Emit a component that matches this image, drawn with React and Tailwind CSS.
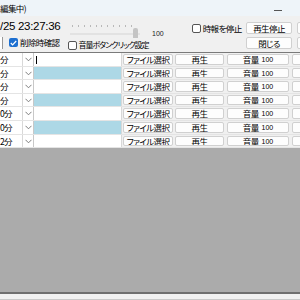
import React from "react";

const F = { fontFamily: '"Noto Sans CJK JP", "Noto Sans", sans-serif' };
const JP = "whitespace-nowrap text-[8.5px] leading-none tracking-[-0.6px] text-black [font-feature-settings:'palt']";
const LS = { fontFamily: '"Liberation Sans", Arial, sans-serif' };

function Chevron() {
  return (
    <svg width="7" height="5" viewBox="0 0 7 5" className="block">
      <path d="M0.5 0.8 L3.5 3.8 L6.5 0.8" fill="none" stroke="#707070" strokeWidth="0.9" />
    </svg>
  );
}

function Btn({ children, className = "" }) {
  return (
    <div
      className={
        "shrink-0 whitespace-nowrap overflow-hidden flex items-center justify-center bg-[#fdfdfd] border border-[#d0d0d0] rounded-[2px] " +
        className
      }
    >
      {children}
    </div>
  );
}

function Row({ label, blue, h, first }) {
  return (
    <div className={"flex items-stretch border-b border-[#e4e4e4] bg-[#f0f0f0] " + h}>
      <div className={"shrink-0 w-[23px] bg-white flex items-center border-r border-[#d8d8d8] " + JP}>
        {label}
      </div>
      <div className="shrink-0 w-[11px] bg-white flex items-center justify-center border-r border-[#c8c8c8]">
        <Chevron />
      </div>
      <div className={"shrink-0 w-[88px] flex items-center border-r border-[#d8d8d8] " + (blue ? "bg-[#add8e6]" : "bg-white")}>
        {first ? <div className="ml-[2px] w-px h-[8px] bg-black" /> : null}
      </div>
      <div className="shrink-0 w-[1px]" />
      <Btn className="w-[50px] my-[1px]">
        <span className={JP}>ファイル選択</span>
      </Btn>
      <div className="shrink-0 w-[2px]" />
      <Btn className="w-[49px] my-[1px]">
        <span className={JP}>再生</span>
      </Btn>
      <div className="shrink-0 w-[3px]" />
      <Btn className="w-[62px] my-[1px]">
        <span className={JP}>音量</span>
        <span className="ml-[3px] text-[7px] leading-none text-black" style={LS}>100</span>
      </Btn>
      <div className="shrink-0 w-[3px]" />
      <Btn className="w-[20px] my-[1px]"> </Btn>
    </div>
  );
}

export default function App() {
  const rows = [
    { label: "分", blue: false, h: "h-[14px]", first: true },
    { label: "分", blue: true, h: "h-[13px]" },
    { label: "分", blue: false, h: "h-[14px]" },
    { label: "分", blue: true, h: "h-[13px]" },
    { label: "0分", blue: false, h: "h-[14px]" },
    { label: "0分", blue: true, h: "h-[14px]" },
    { label: "2分", blue: false, h: "h-[13px]" },
  ];
  return (
    <div className="w-[300px] h-[300px] overflow-hidden bg-[#f0f0f0] flex flex-col" style={F}>
      {/* title bar */}
      <div className="h-[16px] bg-[#eef4f9] flex items-center justify-between shrink-0">
        <span className={JP + " mt-[1px]"}>編集中)</span>
        <div className="w-[8px] h-px bg-[#555] mr-[18px] mt-[4px]" />
      </div>
      {/* top controls */}
      <div className="h-[36px] flex shrink-0">
        <div className="w-[246px] shrink-0 flex flex-col">
          <div className="h-[20px] flex items-start whitespace-nowrap">
            <span className="shrink-0 w-[62px] mt-[5px] text-[11.5px] leading-none tracking-[-0.3px] text-black" style={LS}>/25 23:27:36</span>
            <div className="shrink-0 ml-[8px] w-[70px] h-[20px] relative">
              <div className="absolute left-[2px] right-[8px] top-[9px] flex justify-between">
                {Array.from({ length: 11 }).map((_, i) => (
                  <div key={i} className="w-px h-[2px] bg-[#b8b8b8]" />
                ))}
              </div>
              <div className="absolute left-0 right-0 top-[17px] h-[2px] bg-[#e2e2e2]" />
              <div className="absolute left-[63px] top-[12px] w-[5px] h-[10px] bg-[#c4c4c4] rounded-t-[2px]" />
            </div>
            <span className="shrink-0 ml-[12px] mt-[14px] text-[7px] leading-none text-[#222]" style={LS}>100</span>
            <div className="shrink-0 ml-[28px] mt-[8px] w-[9px] h-[9px] border border-[#555] rounded-[2px] bg-white" />
            <span className={"shrink-0 ml-[2px] mt-[8px] " + JP}>時報を停止</span>
          </div>
          <div className="h-[16px] flex items-start whitespace-nowrap">
            <div className="shrink-0 mt-[1px] w-[3px] h-[12px] bg-white border-r border-[#999]" />
            <div className="shrink-0 ml-[6px] mt-[2px] w-[9px] h-[9px] rounded-[2px] bg-[#1d6fd0] flex items-center justify-center">
              <svg width="7" height="6" viewBox="0 0 7 6">
                <path d="M0.8 3 L2.6 4.8 L6.2 1" fill="none" stroke="#fff" strokeWidth="1.2" />
              </svg>
            </div>
            <span className={"shrink-0 ml-[2px] mt-[2px] " + JP}>削除時確認</span>
            <div className="shrink-0 ml-[8px] mt-[5px] w-[9px] h-[9px] border border-[#555] rounded-[2px] bg-white" />
            <span className="shrink-0 ml-[2px] mt-[5px] whitespace-nowrap text-[8px] leading-none tracking-[-1px] text-black [font-feature-settings:'palt']">音量ボタンクリック設定</span>
          </div>
        </div>
        <div className="flex flex-col pt-[6px] gap-[3px]">
          <div className="flex gap-[5px]">
            <Btn className="w-[46px] h-[12px]">
              <span className={JP}>再生停止</span>
            </Btn>
            <Btn className="w-[10px] h-[12px]"> </Btn>
          </div>
          <div className="flex gap-[5px]">
            <Btn className="w-[46px] h-[12px]">
              <span className={JP}>閉じる</span>
            </Btn>
            <Btn className="w-[10px] h-[12px]"> </Btn>
          </div>
        </div>
      </div>
      {/* grid */}
      <div className="flex-1 flex flex-col bg-[#ababab] border-t border-[#7a7a7a]">
        <div className="flex flex-col">
          {rows.map((r, i) => (
            <Row key={i} {...r} />
          ))}
        </div>
      </div>
      <div className="h-[2px] bg-[#6e6e6e] shrink-0" />
      <div className="h-[6px] bg-[#f0f0f0] shrink-0 border-b border-[#c8c8c8]" />
    </div>
  );
}
